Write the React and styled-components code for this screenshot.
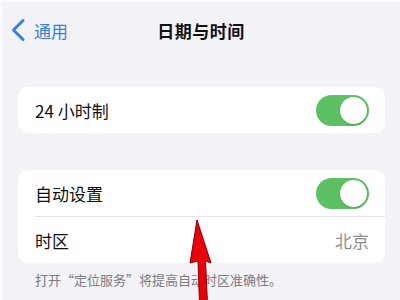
import React from "react";
import styled, { createGlobalStyle } from "styled-components";

const GlobalStyle = createGlobalStyle`
  html, body {
    margin: 0;
    padding: 0;
    background: #f2f2f7;
  }
  body {
    font-family: "Noto Sans CJK SC", "Noto Sans", sans-serif;
  }
`;

const Screen = styled.div`
  position: relative;
  width: 400px;
  height: 300px;
  overflow: hidden;
  background: #f2f2f7;
  box-sizing: border-box;
  border-top: 2px solid #fafafc;
  border-left: 2px solid #fafafc;
`;

const NavBar = styled.div`
  position: relative;
  display: flex;
  align-items: center;
  justify-content: center;
  height: 56px;
`;

const BackButton = styled.div`
  position: absolute;
  left: 8px;
  top: 0;
  bottom: 0;
  display: flex;
  align-items: center;
  gap: 8px;
  color: #3b7ddd;
  font-size: 17px;
`;

const Title = styled.div`
  font-size: 17px;
  font-weight: 700;
  color: #111;
  letter-spacing: 0.5px;
`;

const Content = styled.div`
  display: flex;
  flex-direction: column;
  padding: 29px 15px 0 16px;
`;

const Card = styled.div`
  background: #fff;
  border-radius: 10px;
  margin-bottom: ${(p) => p.$gap || 0}px;
`;

const Row = styled.div`
  display: flex;
  align-items: center;
  justify-content: space-between;
  height: 46px;
  padding: 0 16px 0 17px;
  position: relative;
  & + & {
    border-top: 1px solid #e4e4e8;
    margin-left: 17px;
    padding-left: 0;
  }
`;

const Label = styled.span`
  font-size: 17px;
  color: #111;
`;

const Value = styled.span`
  font-size: 17px;
  color: #8e8e93;
`;

const Switch = styled.div`
  width: 53px;
  height: 31px;
  border-radius: 16px;
  background: #5dc065;
  position: relative;
  &::after {
    content: "";
    position: absolute;
    right: 2px;
    top: 2px;
    width: 27px;
    height: 27px;
    border-radius: 50%;
    background: #fff;
    box-shadow: 0 1px 2px rgba(0, 0, 0, 0.15);
  }
`;

const Footer = styled.div`
  font-size: 13px;
  color: #7b7b80;
  padding: 7px 0 0 17px;
`;

const Arrow = styled.svg`
  position: absolute;
  left: 180px;
  top: 212px;
`;

const Chevron = () => (
  <svg width="16" height="24" viewBox="0 0 16 24">
    <path
      d="M13 2.5 L3.5 12 L13 21.5"
      fill="none"
      stroke="#3b7ddd"
      strokeWidth="3"
      strokeLinecap="round"
      strokeLinejoin="round"
    />
  </svg>
);

export default function App() {
  return (
    <>
      <GlobalStyle />
      <Screen>
        <NavBar>
          <BackButton>
            <Chevron />
            <span>通用</span>
          </BackButton>
          <Title>日期与时间</Title>
        </NavBar>
        <Content>
          <Card $gap={37}>
            <Row>
              <Label>24 小时制</Label>
              <Switch />
            </Row>
          </Card>
          <Card>
            <Row>
              <Label>自动设置</Label>
              <Switch />
            </Row>
            <Row>
              <Label>时区</Label>
              <Value>北京</Value>
            </Row>
          </Card>
          <Footer>打开“定位服务”将提高自动时区准确性。</Footer>
        </Content>
        <Arrow width="40" height="90" viewBox="0 0 40 90">
          <path
            d="M15 6 L29 49 L23.5 47 L25.5 90 L17.5 90 L16 47 L8 49 Z"
            fill="#e8000a"
            stroke="#8a0005"
            strokeWidth="1"
            strokeLinejoin="round"
          />
        </Arrow>
      </Screen>
    </>
  );
}
